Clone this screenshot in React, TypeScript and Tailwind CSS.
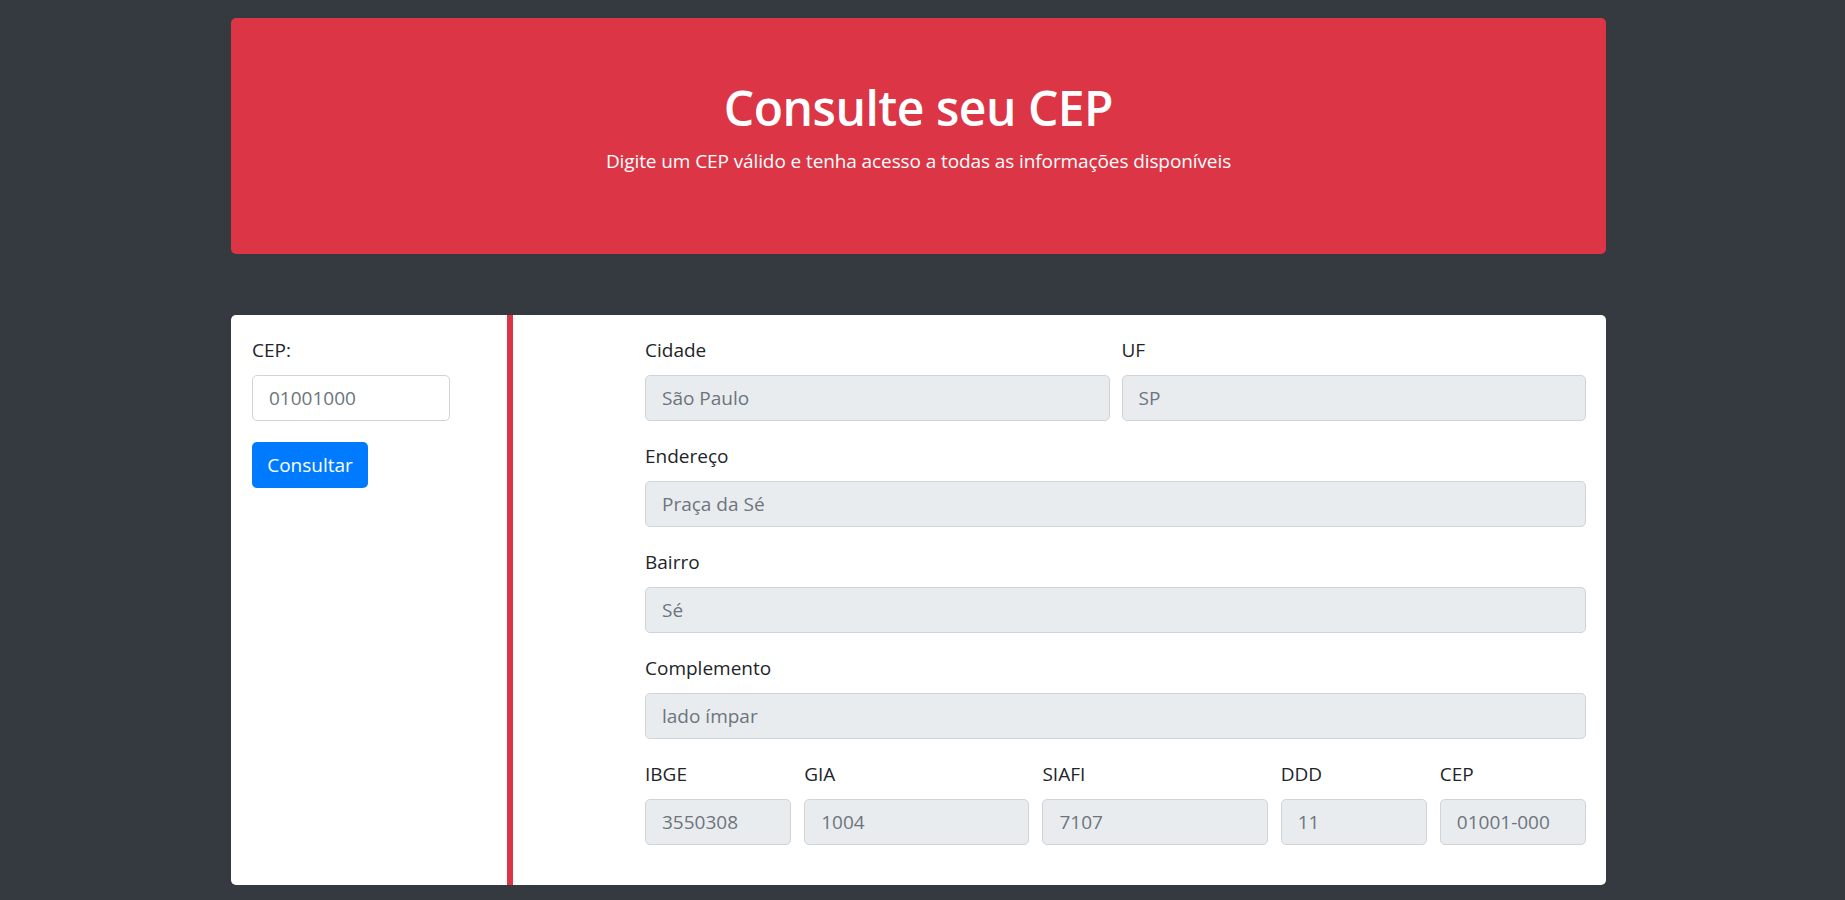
import React from "react";

// ─── Field ────────────────────────────────────────────────────────────────────

function Field({ label, value }: { label: string; value: string }) {
  return (
    <div className="flex flex-col mb-[21px]">
      <label className="text-[19px] leading-[29px] text-[#212529] mb-[10px]">{label}</label>
      <input
        readOnly
        value={value}
        className="h-[46px] w-full rounded-[5px] border border-[#ced4da] bg-[#e9ecef] px-[16px] text-[19px] text-[#6c757d] outline-none"
      />
    </div>
  );
}

// ─── App ──────────────────────────────────────────────────────────────────────

export default function App() {
  return (
    <div
      className="min-h-[900px] bg-[#343a40] pt-[18px] pb-[16px]"
      style={{ fontFamily: '"Open Sans", "Noto Sans", sans-serif' }}
    >
      <div className="ml-[231px] w-[1375px]">
        {/* ── Header ── */}
        <header className="rounded-[5px] bg-[#dc3545] pt-[61px] pb-[78px] text-center text-white">
          <h1 className="text-[48px] font-semibold leading-[58px] tracking-[-0.5px]">Consulte seu CEP</h1>
          <p className="mt-[10px] text-[19px] leading-[29px] tracking-[-0.1px]">
            Digite um CEP válido e tenha acesso a todas as informações disponíveis
          </p>
        </header>

        {/* ── Card ── */}
        <div className="mt-[61px] flex rounded-[5px] bg-white">
          {/* Left — search */}
          <div className="w-[276px] pl-[21px] pt-[21px]">
            <label className="block text-[19px] leading-[29px] text-[#212529] mb-[10px]">CEP:</label>
            <input
              defaultValue="01001000"
              className="h-[46px] w-[198px] rounded-[5px] border border-[#ced4da] bg-white px-[16px] text-[19px] text-[#6c757d] outline-none"
            />
            <button className="mt-[21px] block h-[46px] w-[116px] rounded-[5px] bg-[#007bff] text-[19px] text-white">
              Consultar
            </button>
          </div>

          <div className="w-[6px] bg-[#dc3545]" />

          {/* Right — results */}
          <div className="flex-1 pl-[132px] pr-[20px] pt-[21px] pb-[19px]">
            <div className="grid grid-cols-2 gap-x-[12px]">
              <Field label="Cidade" value="São Paulo" />
              <Field label="UF" value="SP" />
            </div>
            <Field label="Endereço" value="Praça da Sé" />
            <Field label="Bairro" value="Sé" />
            <Field label="Complemento" value="lado ímpar" />
            <div className="grid grid-cols-[146fr_225fr_225fr_146fr_146fr] gap-x-[13px]">
              <Field label="IBGE" value="3550308" />
              <Field label="GIA" value="1004" />
              <Field label="SIAFI" value="7107" />
              <Field label="DDD" value="11" />
              <Field label="CEP" value="01001-000" />
            </div>
          </div>
        </div>
      </div>
    </div>
  );
}
